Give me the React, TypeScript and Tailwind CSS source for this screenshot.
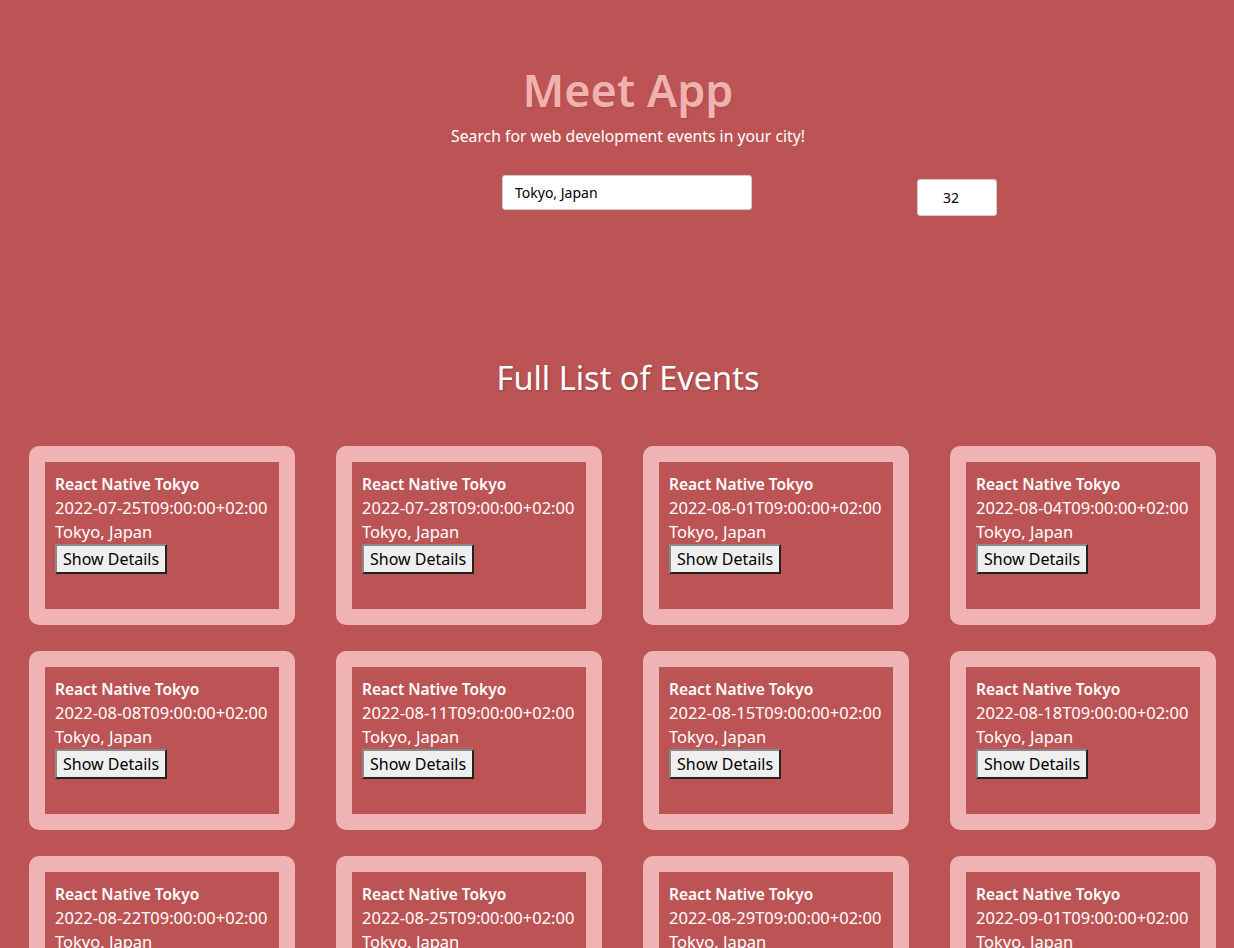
const events = [
  "2022-07-25T09:00:00+02:00",
  "2022-07-28T09:00:00+02:00",
  "2022-08-01T09:00:00+02:00",
  "2022-08-04T09:00:00+02:00",
  "2022-08-08T09:00:00+02:00",
  "2022-08-11T09:00:00+02:00",
  "2022-08-15T09:00:00+02:00",
  "2022-08-18T09:00:00+02:00",
  "2022-08-22T09:00:00+02:00",
  "2022-08-25T09:00:00+02:00",
  "2022-08-29T09:00:00+02:00",
  "2022-09-01T09:00:00+02:00",
];

const EventCard = ({ start }: { start: string }) => {
  return (
    <li className="rounded-[10px] bg-[#f0b3b3] p-4">
      <div className="h-[147px] bg-[#bc5456] px-[10px] pt-[10px] text-white">
        <h2 className="text-[15.5px] font-semibold leading-6">React Native Tokyo</h2>
        <p className="text-[16.5px] leading-6">{start}</p>
        <p className="text-[16.5px] leading-6">Tokyo, Japan</p>
        <button className="h-[30px] border-2 border-t-[#8a8a8a] border-l-[#8a8a8a] border-r-[#222] border-b-[#222] bg-[#efefef] px-[6px] text-base text-black">
          Show Details
        </button>
      </div>
    </li>
  );
};

const App = () => {
  return (
    <div className="h-[948px] overflow-hidden bg-[#bc5456] font-['Noto_Sans',sans-serif]">
      <header className="pl-[22px] pt-[58px] text-center">
        <h1 className="text-[45px] font-semibold leading-[64px] text-[#f0b1b1] [text-shadow:1px_1px_2px_rgba(0,0,0,0.1)]">
          Meet App
        </h1>
        <p className="mt-[2px] text-[15.75px] leading-6 text-white">
          Search for web development events in your city!
        </p>
      </header>
      <div className="mt-[27px] flex items-start">
        <input
          className="ml-[502px] h-[35px] w-[250px] rounded-[3px] border border-[#ccc] bg-white px-3 text-sm text-black outline-none"
          type="text"
          defaultValue="Tokyo, Japan"
        />
        <input
          className="ml-[165px] mt-[4px] h-[37px] w-[80px] rounded-[3px] border border-[#ccc] bg-white pl-[25px] text-sm text-black outline-none"
          type="number"
          defaultValue={32}
        />
      </div>
      <h2 className="mt-[142px] pl-[22px] text-center text-[32.5px] leading-[40px] text-white [text-shadow:1px_1px_2px_rgba(0,0,0,0.25)]">
        Full List of Events
      </h2>
      <ul className="mt-[48px] grid grid-cols-[repeat(4,266px)] gap-x-[41px] gap-y-[26px] pl-[29px]">
        {events.map((e) => (
          <EventCard key={e} start={e} />
        ))}
      </ul>
    </div>
  );
};

export default App;
